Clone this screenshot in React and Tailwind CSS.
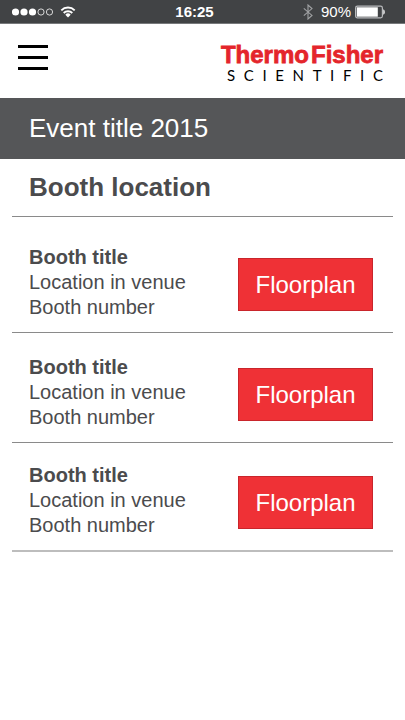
import React from 'react';

const booths = [
  { id: 1, title: 'Booth title', location: 'Location in venue', number: 'Booth number', style: 'pt-7 border-b border-[#8a8a8a]' },
  { id: 2, title: 'Booth title', location: 'Location in venue', number: 'Booth number', style: 'pt-[22px] border-b border-[#8a8a8a]' },
  { id: 3, title: 'Booth title', location: 'Location in venue', number: 'Booth number', style: 'pt-5 border-b-2 border-[#bdbdbd]' },
];

function StatusBar() {
  return (
    <div className="grid grid-cols-3 items-center h-6 pl-3 pr-5 bg-[#414345] border-b border-[#77797b] text-white text-[15px] leading-5">
      <div className="flex items-center gap-[7px]">
        <svg width="41" height="8" viewBox="0 0 41 8" aria-label="Signal strength">
          <g fill="#fff">
            <circle cx="3.5" cy="4" r="3.6" />
            <circle cx="12" cy="4" r="3.6" />
            <circle cx="20.5" cy="4" r="3.6" />
          </g>
          <g fill="none" stroke="#e8e8e8" strokeWidth="0.9">
            <circle cx="29" cy="4" r="3.1" />
            <circle cx="37.5" cy="4" r="3.1" />
          </g>
        </svg>
        <svg width="16" height="12" viewBox="0 0 16 12" aria-label="Wi-Fi">
          <g fill="none" stroke="#fff" strokeWidth="1.9">
            <path d="M1.3 4.3 A9.5 9.5 0 0 1 14.7 4.3" />
            <path d="M3.7 7 A6.1 6.1 0 0 1 12.3 7" />
          </g>
          <path d="M8 11.6 L5.3 8.7 A3.8 3.8 0 0 1 10.7 8.7 Z" fill="#fff" />
        </svg>
      </div>
      <span className="pr-2 text-center font-bold">16:25</span>
      <div className="flex items-center justify-end">
        <svg width="10" height="16" viewBox="0 0 10 16" className="mr-2" aria-label="Bluetooth">
          <path d="M0.8 4.4 L9 11.4 L5 15 V1 L9 4.6 L0.8 11.6" fill="none" stroke="#a0a2a4" strokeWidth="1.1" />
        </svg>
        <span>90%</span>
        <svg width="30" height="14" viewBox="0 0 30 14" className="ml-1" aria-label="Battery">
          <rect x="0.6" y="1.1" width="26.8" height="11.8" rx="1.8" fill="none" stroke="#b9bbbd" strokeWidth="1.2" />
          <rect x="1.8" y="2.3" width="21" height="9.4" fill="#fff" />
          <path d="M28.2 4.2 C30.4 5 30.4 9 28.2 9.8 Z" fill="#e4e5e6" />
        </svg>
      </div>
    </div>
  );
}

function Logo() {
  return (
    <a href="#" className="flex flex-col items-end pt-1" aria-label="Thermo Fisher Scientific">
      <span className="flex gap-[2px] text-2xl leading-6 font-bold text-[#e4252b] [-webkit-text-stroke:0.8px_#e4252b]">
        <span>Thermo</span>
        <span>Fisher</span>
      </span>
      <span className="flex w-[156px] justify-between font-[Lato,sans-serif] text-[15px] leading-4 text-black">
        {'SCIENTIFIC'.split('').map((letter, i) => (
          <span key={i}>{letter}</span>
        ))}
      </span>
    </a>
  );
}

function Booth({ booth }) {
  return (
    <li className={`flex items-center justify-between pl-[17px] pr-5 pb-3 ${booth.style}`}>
      <div className="text-xl leading-[25px] text-[#4b4b4d]">
        <h3 className="font-bold">{booth.title}</h3>
        <p>{booth.location}</p>
        <p>{booth.number}</p>
      </div>
      <button
        type="button"
        className="mt-1 w-[135px] h-[53px] bg-[#ef3136] border border-[#c9252b] text-2xl text-white"
      >
        Floorplan
      </button>
    </li>
  );
}

export default function App() {
  return (
    <div className="min-h-screen bg-white font-['Liberation_Sans',Arial,sans-serif]">
      <StatusBar />

      <header className="flex items-center justify-between h-[74px] pl-[18px] pr-[22px]">
        <button type="button" aria-label="Open menu" className="flex flex-col gap-2 mb-2">
          <span className="block w-[30px] h-[3px] bg-black" />
          <span className="block w-[30px] h-[3px] bg-black" />
          <span className="block w-[30px] h-[3px] bg-black" />
        </button>
        <Logo />
      </header>

      <h1 className="flex items-center h-[61px] pl-[29px] bg-[#555658] text-[26px] text-white">
        Event title 2015
      </h1>

      <main className="px-3">
        <h2 className="h-[58px] pt-3 pl-[17px] border-b border-[#8a8a8a] text-[26px] leading-8 font-bold text-[#4b4b4d]">
          Booth location
        </h2>
        <ul>
          {booths.map((booth) => (
            <Booth key={booth.id} booth={booth} />
          ))}
        </ul>
      </main>
    </div>
  );
}
